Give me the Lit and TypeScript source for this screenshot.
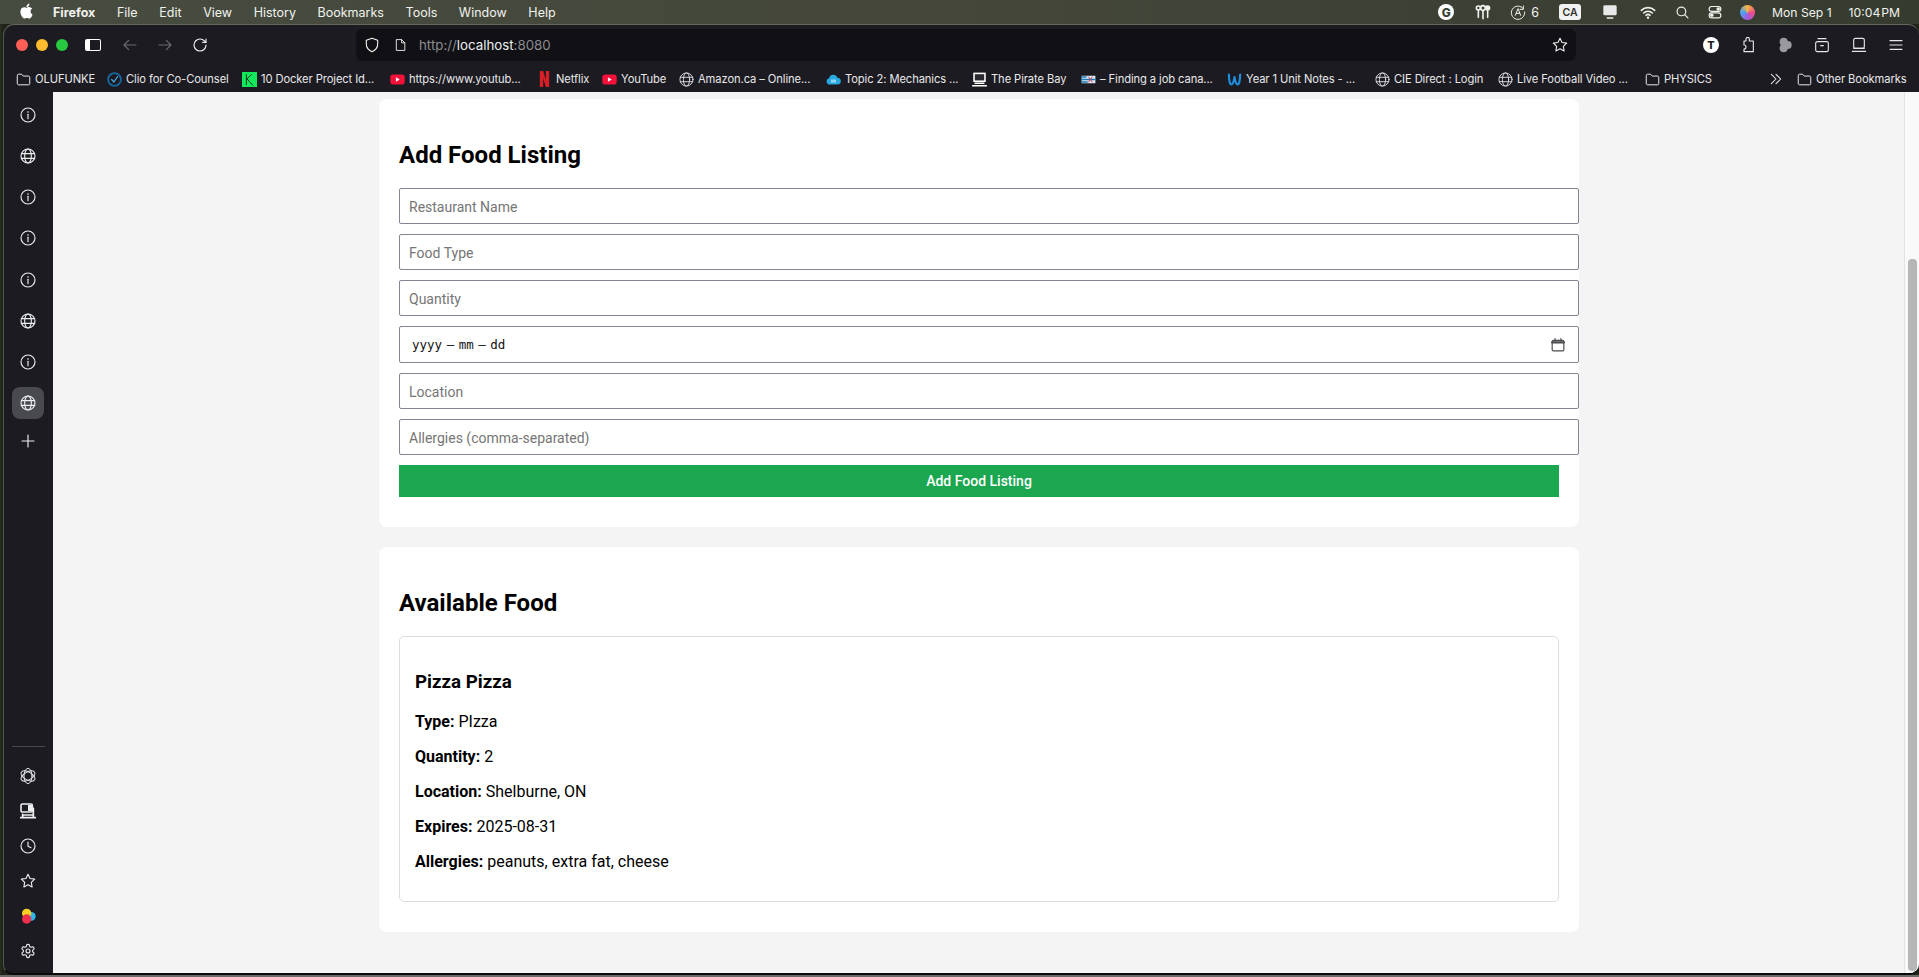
import { LitElement, html, css, svg } from "lit";
import { customElement } from "lit/decorators.js";

const ic = (body: unknown, cls = "i") =>
  html`<svg class=${cls} viewBox="0 0 24 24" aria-hidden="true">${body}</svg>`;

const starShape = svg`<polygon points="12 2 15.09 8.26 22 9.27 17 14.14 18.18 21.02 12 17.77 5.82 21.02 7 14.14 2 9.27 8.91 8.26"/>`;
const info = () => ic(svg`<circle cx="12" cy="12" r="10.5"/><path d="M12 11v6.5"/><circle class="f" cx="12" cy="7.4" r="1.2"/>`);
const globe = () => ic(svg`<circle cx="12" cy="12" r="10.5"/><ellipse cx="12" cy="12" rx="5" ry="10.5"/><path d="M2 8.5h20M2 15.5h20"/>`);
const plus = () => ic(svg`<path d="M12 3v18M3 12h18"/>`);
const knot = () => ic(svg`<g stroke-width="1.4"><ellipse cx="12" cy="12" rx="6" ry="11.5"/><ellipse cx="12" cy="12" rx="6" ry="11.5" transform="rotate(60 12 12)"/><ellipse cx="12" cy="12" rx="6" ry="11.5" transform="rotate(120 12 12)"/></g>`);
const rig = () => ic(svg`<rect x="1.5" y="1.5" width="17" height="12" rx="2" stroke-width="2.4"/><rect class="f" x="12" y="3" width="6" height="9" stroke="none"/><path stroke-width="2.6" d="M20 8v9M1 22h22M4 17v5M20 17v5M4 18h16"/>`);
const clock = () => ic(svg`<circle cx="12" cy="12" r="10.5"/><path d="M12 6v6.5l4.5 2"/>`);
const star = () => ic(starShape);
const gear = () => ic(svg`<path d="M12.22 2h-.44a2 2 0 0 0-2 2v.18a2 2 0 0 1-1 1.73l-.43.25a2 2 0 0 1-2 0l-.15-.08a2 2 0 0 0-2.73.73l-.22.38a2 2 0 0 0 .73 2.73l.15.1a2 2 0 0 1 1 1.72v.51a2 2 0 0 1-1 1.74l-.15.09a2 2 0 0 0-.73 2.73l.22.38a2 2 0 0 0 2.73.73l.15-.08a2 2 0 0 1 2 0l.43.25a2 2 0 0 1 1 1.73V20a2 2 0 0 0 2 2h.44a2 2 0 0 0 2-2v-.18a2 2 0 0 1 1-1.73l.43-.25a2 2 0 0 1 2 0l.15.08a2 2 0 0 0 2.73-.73l.22-.39a2 2 0 0 0-.73-2.73l-.15-.08a2 2 0 0 1-1-1.74v-.5a2 2 0 0 1 1-1.74l.15-.09a2 2 0 0 0 .73-2.73l-.22-.38a2 2 0 0 0-2.73-.73l-.15.08a2 2 0 0 1-2 0l-.43-.25a2 2 0 0 1-1-1.73V4a2 2 0 0 0-2-2z"/><circle cx="12" cy="12" r="3"/>`);
const blobs = () => ic(svg`<g stroke="none"><circle cx="17" cy="12.5" r="6.5" fill="#2fb6e8"/><circle cx="10" cy="8" r="7" fill="#f7d022"/><circle cx="10" cy="16.5" r="7" fill="#ee2f4e"/></g>`);
const folder = () => ic(svg`<path stroke-width="1.6" d="M2 5.5a2 2 0 0 1 2-2h5l2.5 3H20a2 2 0 0 1 2 2v10a2 2 0 0 1-2 2H4a2 2 0 0 1-2-2z"/>`, "i bm");
const yt = () => ic(svg`<rect x="0.5" y="4" width="23" height="16" rx="4.5" fill="#f4123a" stroke="none"/><path d="M9.5 8.5v7l6-3.5z" fill="#fff" stroke="none"/>`, "i bm");
const bmGlobe = () => ic(svg`<g stroke-width="1.4"><circle cx="12" cy="12" r="10.5"/><ellipse cx="12" cy="12" rx="5" ry="10.5"/><path d="M2 8.5h20M2 15.5h20"/></g>`, "i bm");
const clio = () => ic(svg`<circle cx="12" cy="12" r="10.2" stroke="#14689f" stroke-width="3"/><path d="M7.5 12l3.500 4L17 7.500" stroke="#4da6e0" stroke-width="2"/>`, "i bm");
const docker = () => ic(svg`<rect width="24" height="24" fill="#12e85c" stroke="none"/><path d="M7 4v16M8 11l7-7M8 11l9 10" stroke="#0c3b22" stroke-width="1.6"/>`, "i bm");
const netflix = () => html`<svg class="i nf" viewBox="4 0 16 24" aria-hidden="true"><path d="M5 0h5l4 13V0h5v24h-5L10 11v13H5z" fill="#d81f26" stroke="none"/></svg>`;
const cloud = () => ic(svg`<path d="M6 20a5 5 0 0 1-1-9.9A7 7 0 0 1 18.4 9 5.5 5.5 0 0 1 18 20z" fill="#29a8e0" stroke="none"/><rect x="8" y="12" width="8" height="5" fill="#8fd6f5" stroke="none"/>`, "i bm");
const pirate = () => ic(svg`<rect x="2" y="1" width="20" height="15" fill="#fff" stroke="none"/><rect x="4.5" y="3.5" width="15" height="10" fill="#2a2a30" stroke="none"/><path d="M1 22h22M5 18h14" stroke="#fff" stroke-width="2.6"/>`, "i bm");
const flag = () => ic(svg`<rect x="1" y="6" width="22" height="12" fill="#dfeaf2" stroke="none"/><path d="M1 8h7M1 12h22M1 16h9" stroke="#1e78b8" stroke-width="2.200"/><path d="M12 8l6 8M18 8l-6 8" stroke="#c8324a" stroke-width="1.500"/>`, "i bm");
const weebly = () => ic(svg`<path d="M3 4c0 9 1.500 16 4 16 2.500 0 4-6 5-12 1 6 2.500 12 5 12 2.500 0 4-7 4-16" stroke="#1c8fe0" stroke-width="3.400"/>`, "i bm");

const leading: Record<string, () => unknown> = { folder, clio, docker, yt, netflix, bmGlobe, cloud, pirate, flag, weebly };

const BOOKMARKS: [string, string, number][] = [
  ["folder", "OLUFUNKE", 91],
  ["clio", "Clio for Co-Counsel", 135],
  ["docker", "10 Docker Project Id...", 148],
  ["yt", "https://www.youtub...", 149],
  ["netflix", "Netflix", 63],
  ["yt", "YouTube", 77],
  ["bmGlobe", "Amazon.ca – Online...", 147],
  ["cloud", "Topic 2: Mechanics ...", 146],
  ["pirate", "The Pirate Bay", 109],
  ["flag", "– Finding a job cana...", 146],
  ["weebly", "Year 1 Unit Notes - ...", 148],
  ["bmGlobe", "CIE Direct : Login", 123],
  ["bmGlobe", "Live Football Video ...", 147],
  ["folder", "PHYSICS", 124],
];

@customElement("app-root")
export class AppRoot extends LitElement {
  static styles = css`
    :host { display: block; width: 1919px; height: 977px; overflow: hidden; }
    * { box-sizing: border-box; }
    .desk { width: 1919px; height: 977px; display: flex; flex-direction: column;
      background: linear-gradient(90deg, #2c3222, #1f2418 2px, #1f2418); font-family: Inter, "Liberation Sans", sans-serif; color: #eceff0; }
    .i { width: 16px; height: 16px; fill: none; stroke: currentColor; stroke-width: 1.7; stroke-linecap: round; stroke-linejoin: round; flex: none; display: block; }
    .i .f { fill: currentColor; stroke: none; }

    .menubar { height: 24px; flex: none; display: flex; align-items: center; font-size: 12.5px; padding-left: 19px;
      background: linear-gradient(90deg, #474c40, #44473a 50%, #363b30); color: #f1f2ee; }
    .apple { width: 15px; height: 16px; fill: #fff; margin-right: 19px; margin-top: -2px; flex: none; }
    .menus { display: flex; gap: 21.6px; align-items: center; }
    .menus b { font-weight: 700; }
    .status { margin-left: auto; display: flex; align-items: center; padding-right: 19px; }
    .status > * { flex: none; }
    .gly { width: 16px; height: 16px; background: #fff; color: #3a3e33; border-radius: 50%; font-size: 12px; font-weight: 800; display: flex; align-items: center; justify-content: center; margin-right: 21px; }
    .keys { margin-right: 19px; }
    .appstore { margin-right: 5px; }
    .six { margin-right: 20px; font-size: 12.5px; }
    .ca { width: 22px; height: 16px; background: #f2f2f2; color: #30332b; border-radius: 3px; font-size: 10.5px; font-weight: 600; display: flex; align-items: center; justify-content: center; margin-right: 20px; }
    .mon { margin-right: 20px; width: 18px; height: 16px; }
    .wifi { margin-right: 19px; width: 18px; height: 16px; }
    .search { margin-right: 19px; width: 13px; height: 13px; }
    .cc { margin-right: 18px; width: 14px; height: 16px; }
    .ball { width: 15px; height: 15px; border-radius: 50%; margin-right: 17px;
      background: conic-gradient(#f6b73c, #ee4d8b, #a45be0, #4aa3f0, #f6b73c); }
    .clock { display: flex; justify-content: space-between; width: 128px; font-size: 12.2px; white-space: nowrap; }
    .time { word-spacing: -2.5px; }

    .win { flex: 1; min-height: 0; margin-left: 3px; display: flex; flex-direction: column; overflow: hidden;
      border-radius: 11px 11px 10px 10px; background: #1c1b21; border-top: 1px solid #66665f; border-left: 1px solid #55554f; border-bottom: 2px solid #0a0a0a; }
    .floor { height: 2px; flex: none; background: #6a6a68; }
    .toolbar { height: 36px; flex: none; padding-top: 4px; display: flex; }
    .tb-left { width: 352px; flex: none; display: flex; align-items: center; padding-left: 12px; }
    .light { width: 12px; height: 12px; border-radius: 50%; margin-right: 8px; flex: none; }
    .side-toggle { width: 16px; height: 12px; border: 1.5px solid #fff; border-left-width: 5px; border-radius: 2px; margin-left: 9px; margin-right: 21px; flex: none; }
    .nav { margin-right: 19px; color: #6b6b70; }
    .reload { color: #eceff0; }
    .url { width: 1220px; flex: none; height: 32px; background: #111115; border-radius: 6px; display: flex; align-items: center; padding: 0 8px; font-size: 13.3px; color: #8b8b90; }
    .url .i { color: #eceff0; }
    .url .page { margin: 0 12px 0 14px; width: 13px; }
    .url em { font-style: normal; color: #eceff0; }
    .url .star { margin-left: auto; }
    .tb-right { flex: 1; display: flex; align-items: center; justify-content: flex-end; gap: 21px; padding-right: 15px; color: #e6e6e8; }
    .tee { width: 16px; height: 16px; border-radius: 50%; background: #fff; color: #1c1b21; font-size: 11px; font-weight: 800; display: flex; align-items: center; justify-content: center; flex: none; }
    .gblob { color: #9a9a9e; }

    .marks { height: 31px; flex: none; display: flex; align-items: center; padding: 5px 6px 0 12px; font-size: 11.2px; letter-spacing: -.1px; color: #e8e8ea; }
    .mark { display: flex; align-items: center; gap: 4px; white-space: nowrap; flex: none; overflow: hidden; }
    .bm { width: 15px; height: 15px; }
    .nf { width: 11px; height: 16px; margin-right: 2px; }
    .more { width: 28px; flex: none; }
    .more .i { width: 14px; height: 14px; }

    .body { flex: 1; min-height: 0; display: flex; }
    .side { width: 49px; flex: none; display: flex; flex-direction: column; padding: 7px 8px 6px; color: #eceff0; }
    .sgroup { display: flex; flex-direction: column; gap: 9.15px; }
    .sgroup.low { gap: 3px; margin-top: auto; }
    .sbtn { width: 32px; height: 32px; border-radius: 8px; display: flex; align-items: center; justify-content: center; flex: none; }
    .sbtn.on { background: #494950; }
    .sbtn.add { margin-top: -3px; }
    .rule { height: 1px; background: #47474c; margin-bottom: 10px; }

    .main { width: 1852px; flex: none; background: #f4f4f4; padding-top: 7px; overflow: hidden; display: flex; flex-direction: column; align-items: center; gap: 20px; font-family: Roboto, "Liberation Sans", sans-serif; color: #000; }
    .track { flex: 1; background: #f9f9f9; box-shadow: -1px 0 0 #e3e3e3; padding: 167px 2px 2px 3px; }
    .thumb { height: 100%; background: #b6b6b6; border-radius: 4px; }

    .card { width: 1200px; background: #fff; border-radius: 8px; padding: 20px; flex: none; }
    h2 { font-size: 24px; font-weight: 700; line-height: 28px; margin: 22px 0 19px; }
    .field { display: block; box-sizing: content-box; width: 1161px; height: 16px; padding: 10px 8px 8px 9px; margin: 0 0 10px; border: 1px solid #858491; border-radius: 2px; background: #fff; font: 400 14px/16px Roboto, sans-serif; outline: none; }
    .field::placeholder { color: #757575; opacity: 1; }
    .date { display: flex; align-items: center; justify-content: space-between; box-sizing: border-box; width: 1180px; height: 37px; padding: 0 13px 0 12px; margin-bottom: 10px; border: 1px solid #858491; border-radius: 2px; font-family: "DejaVu Sans Mono", monospace; font-size: 12.5px; word-spacing: -3px; color: #111; }
    .cal { width: 14px; height: 14px; color: #4b4b4f; stroke-width: 2; }
    button { display: block; width: 1160px; height: 32px; border: 0; padding: 0; margin: 0 0 10px; background: #1ba750; color: #fff; font: 500 14px Roboto, sans-serif; }
    .item { border: 1px solid #ddd; border-radius: 5px; padding: 15px 15px 14px; margin-bottom: 10px; }
    h3 { font-size: 18.72px; font-weight: 700; line-height: 22px; margin: 19px 0 19px; }
    p { font-size: 16px; line-height: 19px; margin: 16px 0; }
    p strong { font-weight: 700; }
  `;

  render() {
    return html`
      <div class="desk">
        <div class="menubar">
          <svg class="apple" viewBox="0 0 24 24" aria-hidden="true"><path d="M12.152 6.896c-.948 0-2.415-1.078-3.96-1.04-2.04.027-3.91 1.183-4.961 3.014-2.117 3.675-.546 9.103 1.519 12.09 1.013 1.454 2.208 3.09 3.792 3.039 1.52-.065 2.09-.987 3.935-.987 1.831 0 2.35.987 3.96.948 1.637-.026 2.676-1.48 3.676-2.948 1.156-1.688 1.636-3.325 1.662-3.415-.039-.013-3.182-1.221-3.22-4.857-.026-3.04 2.48-4.494 2.597-4.559-1.429-2.09-3.623-2.324-4.39-2.376-2-.156-3.675 1.09-4.61 1.09zM15.53 3.83c.843-1.012 1.4-2.427 1.245-3.83-1.207.052-2.662.805-3.532 1.818-.78.896-1.454 2.338-1.273 3.714 1.338.104 2.715-.688 3.559-1.701"/></svg>
          <div class="menus">
            <b>Firefox</b><span>File</span><span>Edit</span><span>View</span><span>History</span><span>Bookmarks</span><span>Tools</span><span>Window</span><span>Help</span>
          </div>
          <div class="status">
            <span class="gly">G</span>
            ${ic(svg`<g stroke-width="2.4"><path d="M5 9v11"/><circle cx="5" cy="6" r="3"/><circle cx="12" cy="6" r="3.500"/><path d="M12 10v12"/><circle class="f" cx="19" cy="6" r="4"/><path d="M19 10v10"/></g>`, "i keys")}
            ${ic(svg`<path d="M20 7A10 10 0 1 0 22 12" stroke-width="1.5"/><path d="M20 3v5h-5" stroke-width="1.500"/><path d="M8 17l4-10 4 10M9.500 14h5" stroke-width="1.500"/>`, "i appstore")}
            <span class="six">6</span>
            <span class="ca">CA</span>
            ${ic(svg`<rect x="2" y="2" width="20" height="15" rx="2" fill="#e8e8e8" stroke="none"/><path d="M8 21h8" stroke-width="2.500"/>`, "i mon")}
            ${ic(svg`<path d="M2 9.500a14.500 14.500 0 0 1 20 0M5.500 13.500a9.500 9.500 0 0 1 13 0M9 17a4.500 4.500 0 0 1 6 0" stroke-width="2.400"/><circle class="f" cx="12" cy="20.500" r="1.800"/>`, "i wifi")}
            ${ic(svg`<circle cx="10" cy="10" r="8" stroke-width="2.200"/><path d="M16 16l6 6" stroke-width="2.200"/>`, "i search")}
            ${ic(svg`<rect x="2" y="2.500" width="20" height="8.500" rx="4.200" stroke-width="2"/><circle class="f" cx="17.500" cy="6.700" r="3"/><rect x="2" y="13.500" width="20" height="8.500" rx="4.200" stroke-width="2"/><circle class="f" cx="6.500" cy="17.700" r="3"/>`, "i cc")}
            <span class="ball"></span>
            <span class="clock"><span>Mon Sep 1</span><span class="time">10:04 PM</span></span>
          </div>
        </div>

        <div class="win">
          <div class="toolbar">
            <div class="tb-left">
              <span class="light" style="background:#ff5f57"></span>
              <span class="light" style="background:#febc2e"></span>
              <span class="light" style="background:#28c840"></span>
              <span class="side-toggle"></span>
              ${ic(svg`<path d="M21 12H3M10 5l-7 7 7 7"/>`, "i nav")}
              ${ic(svg`<path d="M3 12h18M14 5l7 7-7 7"/>`, "i nav")}
              ${ic(svg`<path d="M21 12a9 9 0 1 1-9-9c2.520 0 4.930 1 6.740 2.740L21 8"/><path d="M21 3v5h-5"/>`, "i reload")}
            </div>
            <div class="url">
              ${ic(svg`<path d="M12 2l8.500 3v6c0 5-3.500 9-8.500 11-5-2-8.500-6-8.500-11V5z"/>`)}
              ${ic(svg`<path d="M5 2h9l6 6v14H5zM14 2v6h6"/>`, "i page")}
              <span>http://<em>localhost</em>:8080</span>
              ${ic(starShape, "i star")}
            </div>
            <div class="tb-right">
              <span class="tee">T</span>
              ${ic(svg`<path d="M10 2a2.500 2.500 0 0 1 5 0v3h6v16H7v-4a3 3 0 0 0 0-6V5h3z" transform="translate(-1 1)"/>`)}
              ${ic(svg`<g class="f"><circle cx="10" cy="7" r="6"/><circle cx="10" cy="17" r="6"/><circle cx="16" cy="12" r="6"/></g>`, "i gblob")}
              ${ic(svg`<rect x="2.500" y="7" width="19" height="15" rx="2.500"/><path d="M6 2.500h12M10 13h4"/>`)}
              ${ic(svg`<rect x="4" y="2" width="16" height="15" rx="2.500"/><path d="M2 21.500h20M4 17h16"/>`)}
              ${ic(svg`<path d="M3 5.500h18M3 12h18M3 18.500h18"/>`)}
            </div>
          </div>

          <div class="marks">
            ${BOOKMARKS.map(([icon, label, w]) => html`<span class="mark" style="width:${w}px">${leading[icon]()}<span>${label}</span></span>`)}
            <span class="more">${ic(svg`<path d="M4 4l8 8-8 8M12 4l8 8-8 8" stroke-width="1.800"/>`)}</span>
            <span class="mark">${folder()}<span>Other Bookmarks</span></span>
          </div>

          <div class="body">
            <nav class="side">
              <div class="sgroup">
                ${[info, globe, info, info, info, globe, info].map((f) => html`<span class="sbtn">${f()}</span>`)}
                <span class="sbtn on">${globe()}</span>
                <span class="sbtn add">${plus()}</span>
              </div>
              <div class="sgroup low">
                <div class="rule"></div>
                ${[knot, rig, clock, star, blobs, gear].map((f) => html`<span class="sbtn">${f()}</span>`)}
              </div>
            </nav>

            <main class="main">
              <section class="card">
                <h2>Add Food Listing</h2>
                <input class="field" placeholder="Restaurant Name" />
                <input class="field" placeholder="Food Type" />
                <input class="field" placeholder="Quantity" />
                <div class="date"><span>yyyy – mm – dd</span>
                  ${ic(svg`<rect x="2" y="4" width="20" height="18" rx="2"/><path d="M2 7.500h20" stroke-width="4"/><path d="M7 1v4M17 1v4"/>`, "i cal")}
                </div>
                <input class="field" placeholder="Location" />
                <input class="field" placeholder="Allergies (comma-separated)" />
                <button>Add Food Listing</button>
              </section>
              <section class="card">
                <h2>Available Food</h2>
                <div class="item">
                  <h3>Pizza Pizza</h3>
                  <p><strong>Type:</strong> PIzza</p>
                  <p><strong>Quantity:</strong> 2</p>
                  <p><strong>Location:</strong> Shelburne, ON</p>
                  <p><strong>Expires:</strong> 2025-08-31</p>
                  <p><strong>Allergies:</strong> peanuts, extra fat, cheese</p>
                </div>
              </section>
            </main>
            <div class="track"><div class="thumb"></div></div>
          </div>
        </div>
        <div class="floor"></div>
      </div>
    `;
  }
}
